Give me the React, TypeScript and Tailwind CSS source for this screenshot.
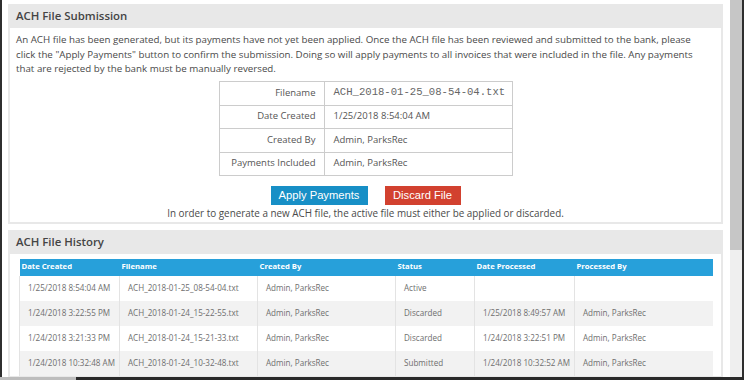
import React from "react";

const rows = [
  ["1/25/2018 8:54:04 AM", "ACH_2018-01-25_08-54-04.txt", "Admin, ParksRec", "Active", "", ""],
  ["1/24/2018 3:22:55 PM", "ACH_2018-01-24_15-22-55.txt", "Admin, ParksRec", "Discarded", "1/25/2018 8:49:57 AM", "Admin, ParksRec"],
  ["1/24/2018 3:21:33 PM", "ACH_2018-01-24_15-21-33.txt", "Admin, ParksRec", "Discarded", "1/24/2018 3:22:51 PM", "Admin, ParksRec"],
  ["1/24/2018 10:32:48 AM", "ACH_2018-01-24_10-32-48.txt", "Admin, ParksRec", "Submitted", "1/24/2018 10:32:52 AM", "Admin, ParksRec"],
];

const heads = ["Date Created", "Filename", "Created By", "Status", "Date Processed", "Processed By"];
const widths = [100, 138, 138, 79, 100, 138];

export default function App() {
  return (
    <div className="relative flex h-[380px] w-[744px] overflow-hidden bg-white font-['Open_Sans',sans-serif]">
      <div className="w-[2px] shrink-0 bg-[#2e2e2e]" />
      <div className="min-w-0 flex-1 pl-[6px] pr-[7px] pt-[4px]">
        {/* Panel 1 */}
        <div className="bg-[#e8e8e8] px-[2px] pb-[2px]">
          <div className="flex h-[24px] items-center pl-[6px] text-[11.4px] font-semibold text-[#444]">
            ACH File Submission
          </div>
          <div className="bg-white pb-[2px]">
            <p className="whitespace-nowrap pl-[6px] pt-[5px] text-[9.75px] leading-[14.5px] text-[#4a4a4a]">
              An ACH file has been generated, but its payments have not yet been applied. Once the ACH file has been reviewed and submitted to the bank, please
              <br />
              click the "Apply Payments" button to confirm the submission. Doing so will apply payments to all invoices that were included in the file. Any payments
              <br />
              that are rejected by the bank must be manually reversed.
            </p>
            <table className="mx-auto mt-[4px] border-collapse text-[9.5px] text-[#555]">
              <tbody>
                <tr>
                  <td className="h-[24px] w-[105px] border border-[#ccc] pr-[8px] text-right">Filename</td>
                  <td className="w-[188px] border border-[#ccc] pl-[9px] font-['Liberation_Mono',monospace] text-[10.6px] text-[#666]">
                    ACH_2018-01-25_08-54-04.txt
                  </td>
                </tr>
                <tr>
                  <td className="h-[23px] border border-[#ccc] pr-[8px] text-right">Date Created</td>
                  <td className="border border-[#ccc] pl-[9px]">1/25/2018 8:54:04 AM</td>
                </tr>
                <tr>
                  <td className="h-[24px] border border-[#ccc] pr-[8px] text-right">Created By</td>
                  <td className="border border-[#ccc] pl-[9px]">Admin, ParksRec</td>
                </tr>
                <tr>
                  <td className="h-[23px] border border-[#ccc] pr-[8px] text-right">Payments Included</td>
                  <td className="border border-[#ccc] pl-[9px]">Admin, ParksRec</td>
                </tr>
              </tbody>
            </table>
            <div className="mt-[10px] flex justify-center gap-[17px] font-['Liberation_Sans',Arial,sans-serif] text-[11.2px] text-white">
              <button className="flex h-[19px] w-[97px] items-center justify-center bg-[#178fc6]">Apply Payments</button>
              <button className="flex h-[19px] w-[76px] items-center justify-center bg-[#d2412f]">Discard File</button>
            </div>
            <p className="mt-[1px] whitespace-nowrap text-center text-[9.9px] leading-[14px] text-[#4a4a4a]">
              In order to generate a new ACH file, the active file must either be applied or discarded.
            </p>
          </div>
        </div>

        {/* Panel 2 */}
        <div className="mt-[6px] bg-[#e8e8e8] px-[2px] pb-[2px]">
          <div className="flex h-[24px] items-center pl-[6px] text-[11.4px] font-semibold text-[#444]">
            ACH File History
          </div>
          <div className="bg-white px-[9px] pt-[5px]">
            <table className="w-full table-fixed border-collapse">
              <colgroup>
                {widths.map((w, i) => (
                  <col key={i} style={{ width: w }} />
                ))}
              </colgroup>
              <thead>
                <tr className="bg-[#27a0da]">
                  {heads.map((h) => (
                    <th key={h} className="h-[17px] whitespace-nowrap pl-[2px] text-left text-[7.7px] font-bold text-white">
                      {h}
                    </th>
                  ))}
                </tr>
              </thead>
              <tbody>
                {rows.map((r, i) => (
                  <tr key={i} className={i % 2 === 1 ? "bg-[#f2f2f2]" : "bg-white"}>
                    {r.map((c, j) => (
                      <td
                        key={j}
                        className="h-[25px] whitespace-nowrap border-l border-[#e3e3e3] pl-[8px] text-[8.1px] text-[#6e6e6e]"
                      >
                        {c}
                      </td>
                    ))}
                  </tr>
                ))}
              </tbody>
            </table>
          </div>
        </div>
      </div>
      <div className="flex w-[12px] shrink-0 flex-col">
        <div className="h-[250px] bg-[#c6c6c6]" />
        <div className="flex-1 bg-[#efefef]" />
      </div>
      <div className="w-[2px] shrink-0 bg-[#2e2e2e]" />
      <div className="absolute bottom-0 left-0 flex h-[3px] w-full">
        <div className="w-[76px] bg-[#bdbdbd]" />
        <div className="flex-1 bg-[#2a2a2a]" />
      </div>
    </div>
  );
}
